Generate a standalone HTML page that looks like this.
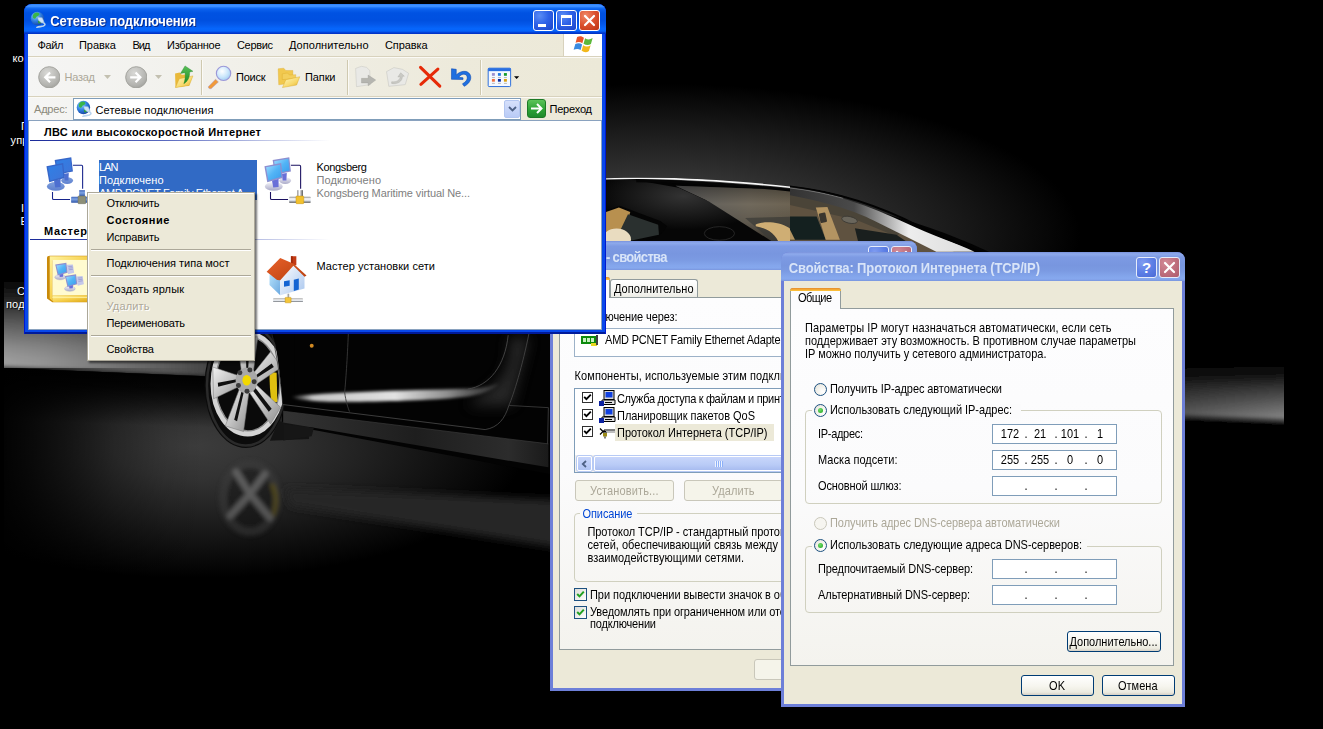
<!DOCTYPE html>
<html lang="ru">
<head>
<meta charset="utf-8">
<title>Сетевые подключения</title>
<style>
*{box-sizing:border-box;margin:0;padding:0}
html,body{width:1323px;height:729px;background:#000;overflow:hidden}
body{position:relative;font-family:"Liberation Sans",sans-serif;font-size:11px;color:#000;-webkit-font-smoothing:antialiased}
.abs{position:absolute}
#wall{position:absolute;left:0;top:0;width:1323px;height:729px}
.dl{position:absolute;color:#fff;font-size:11px;white-space:nowrap;line-height:13px;text-shadow:1px 1px 1px #000}
/* ---------- generic window ---------- */
.win{position:absolute;background:#ece9d8}
.tb{position:absolute;left:0;top:0;right:0;height:30px;border-radius:8px 8px 0 0}
.tbtxt{position:absolute;white-space:nowrap;font-weight:bold;font-size:13px;line-height:16px}
.cbtn{position:absolute;width:21px;height:21px;border:1px solid #fff;border-radius:3px}
.t{position:absolute;white-space:nowrap;line-height:13px;display:block}
</style>
</head>
<body>
<svg width="0" height="0" style="position:absolute"><defs>
<linearGradient id="scrSel" x1="0" y1="0" x2="1" y2="1"><stop offset="0" stop-color="#2f80e6"/><stop offset="1" stop-color="#3f74d8"/></linearGradient>
<linearGradient id="scr" x1="0" y1="0" x2="1" y2="1"><stop offset="0" stop-color="#9fdcff"/><stop offset=".5" stop-color="#52b4f6"/><stop offset="1" stop-color="#3a9cec"/></linearGradient>
<linearGradient id="baseSel" x1="0" y1="0" x2="0" y2="1"><stop offset="0" stop-color="#7f9fdc"/><stop offset="1" stop-color="#5d80cf"/></linearGradient>
<linearGradient id="base" x1="0" y1="0" x2="0" y2="1"><stop offset="0" stop-color="#f4f4f8"/><stop offset="1" stop-color="#a9a9c8"/></linearGradient>
<linearGradient id="pipe" x1="0" y1="0" x2="0" y2="1"><stop offset="0" stop-color="#8a8a8a"/><stop offset=".35" stop-color="#fdfdfd"/><stop offset=".7" stop-color="#cfd6e0"/><stop offset="1" stop-color="#4a4a4a"/></linearGradient>
<linearGradient id="pipeSel" x1="0" y1="0" x2="0" y2="1"><stop offset="0" stop-color="#3d63b8"/><stop offset=".4" stop-color="#7ea4e4"/><stop offset="1" stop-color="#2f55a8"/></linearGradient>
<linearGradient id="pipeV" x1="0" y1="0" x2="1" y2="0"><stop offset="0" stop-color="#8a8a8a"/><stop offset=".4" stop-color="#fdfdfd"/><stop offset="1" stop-color="#555"/></linearGradient>
<linearGradient id="gold" x1="0" y1="0" x2="1" y2="1"><stop offset="0" stop-color="#fff3a0"/><stop offset=".5" stop-color="#f6cf4a"/><stop offset="1" stop-color="#d9a010"/></linearGradient>
<linearGradient id="roof" x1="0" y1="0" x2="1" y2="1"><stop offset="0" stop-color="#e8612a"/><stop offset="1" stop-color="#b8400f"/></linearGradient>
<linearGradient id="hwall" x1="0" y1="0" x2="1" y2="1"><stop offset="0" stop-color="#ffffff"/><stop offset="1" stop-color="#a9c6ee"/></linearGradient>
<linearGradient id="hside" x1="0" y1="0" x2="1" y2="1"><stop offset="0" stop-color="#b4e0fa"/><stop offset="1" stop-color="#6aa8e0"/></linearGradient>
<linearGradient id="fold" x1="0" y1="0" x2="1" y2="1"><stop offset="0" stop-color="#fff7c0"/><stop offset=".6" stop-color="#f7d86a"/><stop offset="1" stop-color="#e2ae25"/></linearGradient>
<radialGradient id="navg" cx=".4" cy=".3" r=".8"><stop offset="0" stop-color="#d9d9d6"/><stop offset=".7" stop-color="#b4b4b0"/><stop offset="1" stop-color="#9c9c98"/></radialGradient>
<radialGradient id="lens" cx=".4" cy=".35" r=".7"><stop offset="0" stop-color="#ffffff"/><stop offset=".6" stop-color="#c9e6fb"/><stop offset="1" stop-color="#9fc9f0"/></radialGradient>
<linearGradient id="grn" x1="0" y1="0" x2="0" y2="1"><stop offset="0" stop-color="#58c058"/><stop offset="1" stop-color="#1c8a22"/></linearGradient>
<linearGradient id="gbtn" x1="0" y1="0" x2="0" y2="1"><stop offset="0" stop-color="#5cc35a"/><stop offset=".5" stop-color="#2da336"/><stop offset="1" stop-color="#1f8a2c"/></linearGradient>
<radialGradient id="globe" cx=".35" cy=".3" r=".8"><stop offset="0" stop-color="#8fd0ff"/><stop offset=".5" stop-color="#2f7fe0"/><stop offset="1" stop-color="#123a9a"/></radialGradient>
</defs></svg><svg id="wall" width="1323" height="729" viewBox="0 0 1323 729">
<defs>
<clipPath id="wc"><rect x="4" y="0" width="1280" height="729"/></clipPath>
<radialGradient id="gBack" cx="660" cy="235" r="420" gradientUnits="userSpaceOnUse" gradientTransform="translate(660 235) scale(1 .36) translate(-660 -235)">
<stop offset="0" stop-color="#454545"/><stop offset=".35" stop-color="#363636"/><stop offset=".7" stop-color="#1a1a1a"/><stop offset="1" stop-color="#000"/></radialGradient>
<linearGradient id="gHorL" x1="0" y1="0" x2="1" y2="0"><stop offset="0" stop-color="#a0a0a0"/><stop offset=".2" stop-color="#929292"/><stop offset=".42" stop-color="#787878"/><stop offset=".62" stop-color="#5e5e5e"/><stop offset=".82" stop-color="#3e3e3e"/><stop offset="1" stop-color="#1a1a1a"/></linearGradient>
<linearGradient id="gFadeUp" x1="0" y1="0" x2="0" y2="1"><stop offset="0" stop-color="#000" stop-opacity="1"/><stop offset=".2" stop-color="#000" stop-opacity=".78"/><stop offset=".45" stop-color="#000" stop-opacity=".4"/><stop offset=".68" stop-color="#000" stop-opacity=".1"/><stop offset=".8" stop-color="#000" stop-opacity="0"/><stop offset="1" stop-color="#000" stop-opacity="0"/></linearGradient>
<linearGradient id="gFadeUpR" x1="0" y1="0" x2="0" y2="1"><stop offset="0" stop-color="#000" stop-opacity="1"/><stop offset=".12" stop-color="#000" stop-opacity="1"/><stop offset=".3" stop-color="#000" stop-opacity=".86"/><stop offset=".5" stop-color="#000" stop-opacity=".55"/><stop offset=".75" stop-color="#000" stop-opacity=".2"/><stop offset=".9" stop-color="#000" stop-opacity="0"/><stop offset="1" stop-color="#000" stop-opacity="0"/></linearGradient>
<linearGradient id="gHorDark" gradientUnits="userSpaceOnUse" x1="0" y1="366" x2="-2" y2="420"><stop offset="0" stop-color="#000" stop-opacity="1"/><stop offset=".3" stop-color="#000" stop-opacity=".85"/><stop offset="1" stop-color="#000" stop-opacity="0"/></linearGradient>
<linearGradient id="gLeftDark" x1="0" y1="0" x2="1" y2="0"><stop offset="0" stop-color="#000" stop-opacity=".9"/><stop offset=".25" stop-color="#000" stop-opacity=".6"/><stop offset=".55" stop-color="#000" stop-opacity=".25"/><stop offset=".8" stop-color="#000" stop-opacity=".07"/><stop offset="1" stop-color="#000" stop-opacity="0"/></linearGradient>
<linearGradient id="gHorR" x1="1" y1="0" x2="0" y2="0"><stop offset="0" stop-color="#858585"/><stop offset=".6" stop-color="#5a5a5a"/><stop offset="1" stop-color="#333"/></linearGradient>
<radialGradient id="gFloor" cx="195" cy="446" r="330" gradientUnits="userSpaceOnUse" gradientTransform="translate(195 446) scale(1 .4) translate(-195 -446)">
<stop offset="0" stop-color="#3c3c3c"/><stop offset=".25" stop-color="#323232"/><stop offset=".5" stop-color="#222"/><stop offset=".75" stop-color="#111"/><stop offset="1" stop-color="#000"/></radialGradient>
<linearGradient id="gDoor" x1="0" y1="0" x2="1" y2="0"><stop offset="0" stop-color="#aaa" stop-opacity=".2"/><stop offset=".1" stop-color="#d0d0d0" stop-opacity=".95"/><stop offset=".5" stop-color="#e2e2e2" stop-opacity="1"/><stop offset=".75" stop-color="#a0a0a0" stop-opacity=".9"/><stop offset="1" stop-color="#666" stop-opacity=".4"/></linearGradient>
<linearGradient id="gSill" x1="0" y1="0" x2="1" y2="0"><stop offset="0" stop-color="#333"/><stop offset=".5" stop-color="#1e1e1e"/><stop offset=".85" stop-color="#2c2c2c"/><stop offset="1" stop-color="#1a1a1a"/></linearGradient>
<linearGradient id="gGlass" x1="0" y1="0" x2="1" y2="0"><stop offset="0" stop-color="#5c5c5c"/><stop offset=".3" stop-color="#70695c"/><stop offset=".6" stop-color="#6a5f4c"/><stop offset="1" stop-color="#5a4e3c"/></linearGradient>
<linearGradient id="gGlassV" x1="0" y1="0" x2="0" y2="1"><stop offset="0" stop-color="#000" stop-opacity=".35"/><stop offset=".3" stop-color="#000" stop-opacity="0"/><stop offset=".6" stop-color="#000" stop-opacity=".15"/><stop offset="1" stop-color="#000" stop-opacity=".6"/></linearGradient>
<linearGradient id="gPillar" gradientUnits="userSpaceOnUse" x1="0" y1="0" x2="1100" y2="0"><stop offset="0" stop-color="#333"/><stop offset=".35" stop-color="#4a4a4a"/><stop offset=".5" stop-color="#9a9a9a"/><stop offset=".65" stop-color="#ededed"/><stop offset="1" stop-color="#dcdcdc"/></linearGradient>
<radialGradient id="gSheen" cx=".45" cy=".25" r=".5"><stop offset="0" stop-color="#333"/><stop offset="1" stop-color="#060606"/></radialGradient>
<linearGradient id="gSpoke" x1="0" y1="0" x2="1" y2="1"><stop offset="0" stop-color="#f2f2f2"/><stop offset=".5" stop-color="#c4c4c4"/><stop offset="1" stop-color="#8c8c8c"/></linearGradient>
<clipPath id="roofL"><path d="M600,179 L606,178.2 C680,176.5 750,180.5 790,185.5 L790,262 L600,262 Z"/></clipPath>
<clipPath id="roofR"><path d="M790,185.5 C830,190.5 860,198.5 883,206.5 C920,220.5 950,237.5 982,252 L1000,262 L790,262 Z"/></clipPath>
<filter id="b10" x="-20%" y="-100%" width="140%" height="300%"><feGaussianBlur stdDeviation="8"/></filter><filter id="b30" x="-50%" y="-50%" width="200%" height="200%"><feGaussianBlur stdDeviation="30"/></filter><filter id="b2"><feGaussianBlur stdDeviation="2"/></filter>
<filter id="b3"><feGaussianBlur stdDeviation="3"/></filter>
<filter id="b4"><feGaussianBlur stdDeviation="4"/></filter>
<filter id="b7"><feGaussianBlur stdDeviation="7"/></filter>
<filter id="b1"><feGaussianBlur stdDeviation="1"/></filter>
<filter id="b12"><feGaussianBlur stdDeviation="12"/></filter>
</defs>
<g clip-path="url(#wc)">
<!-- backdrop glow -->
<rect x="4" y="0" width="1280" height="440" fill="url(#gBack)"/>
<!-- left horizon glow -->
<g filter="url(#b2)"><polygon points="-10,280 270,280 270,379 -10,367" fill="url(#gHorL)"/>
<polygon points="-12,278 272,278 272,381 -12,369" fill="url(#gFadeUp)"/><polygon points="-12,369 272,381 272,400 -12,390" fill="#000"/></g>
<!-- right horizon glow -->
<g filter="url(#b2)"><polygon points="1100,356 1300,356 1300,421 1100,413" fill="url(#gHorR)"/>
<polygon points="1100,354 1300,354 1300,423 1100,415" fill="url(#gFadeUpR)"/><polygon points="1100,415 1300,423 1300,440 1100,432" fill="#000"/></g>
<!-- floor -->
<polygon points="4,368 300,380 700,396 700,729 4,729" fill="#000"/>
<polygon points="4,368 400,384 700,396 700,729 4,729" fill="url(#gFloor)"/>
<polygon points="4,368 400,384 700,396 700,470 4,445" fill="url(#gHorDark)"/>
<rect x="4" y="368" width="200" height="361" fill="url(#gLeftDark)"/>
<!-- floor streaks -->
<g filter="url(#b4)">
<polygon points="285,488 560,500 560,548 290,506" fill="#262626"/>
</g>
<!-- CAR BODY silhouette -->
<path d="M205,333 L205,290 C260,225 420,184 606,178 C760,180 900,205 1010,262 L1150,316 L1150,517 L560,476 L282,424 L282,333 Z" fill="#030303"/>
<!-- ROOF / CABIN (coords of crop 600,150 scale 6.615) -->
<g clip-path="url(#roofL)"><g transform="translate(600 150) scale(.15117)">
<path d="M500,236 L1400,270 L2100,420 L2100,640 L1130,640 L700,330 Z" fill="url(#gGlass)"/>
<path d="M500,236 L1400,270 L2100,420 L2100,640 L1130,640 L700,330 Z" fill="url(#gGlassV)"/>
<path d="M1323,440 L2000,470 L2000,640 L1323,640 Z" fill="#14201f" opacity=".8"/>
<path d="M960,450 L1323,440 L1323,640 L1180,640 Z" fill="#3a3a36" opacity=".7"/>
<!-- rear deck / pillar -->
<path d="M40,192 L240,200 L520,250 L720,340 L1130,600 L1180,640 L40,640 Z" fill="url(#gSheen)"/>
<!-- side window -->
<path d="M40,400 L130,368 L400,470 L445,505 L385,575 L200,640 L40,640 Z" fill="#050505"/>
<path d="M40,410 L125,380 L200,410 L150,600 L40,600 Z" fill="#b8904f"/>
<path d="M185,425 L385,495 L390,560 L200,600 L120,560 Z" fill="#2a302f"/>
<ellipse cx="110" cy="590" rx="95" ry="70" fill="#e9dcc0"/>
<!-- head rest -->
<path d="M1030,492 C1080,470 1180,470 1250,515 C1290,545 1300,590 1300,640 L1190,640 C1180,580 1130,520 1030,505 Z" fill="#cfae74"/>
<ellipse cx="790" cy="552" rx="100" ry="45" fill="none" stroke="#2e2e2e" stroke-width="5"/>
<!-- roof highlight -->
<path d="M40,190 C400,176 900,205 1400,262" fill="none" stroke="#f6f6f6" stroke-width="11"/>
<path d="M240,204 C500,206 900,224 1400,282" fill="none" stroke="#050505" stroke-width="18"/>
</g></g>
<!-- front part (coords of crop 790,170 scale 6.014) -->
<g clip-path="url(#roofR)"><g transform="translate(790 170) scale(.16628)">
<path d="M0,150 L300,200 L700,330 L1000,500 L0,500 Z" fill="#5f5240"/>
<path d="M0,130 C150,150 350,190 520,260 L700,340 L640,400 L400,300 L0,210 Z" fill="#4a4438"/>
<path d="M0,280 L160,280 L215,420 L0,420 Z" fill="#14201f"/>
<path d="M390,350 L640,390 L760,470 L420,470 Z" fill="#1a1f1e"/>
<path d="M155,225 L225,222 L300,420 L215,420 Z" fill="#b39462"/>
<rect x="178" y="258" width="40" height="58" rx="6" fill="#3a362e" transform="rotate(-12 198 287)"/>
<ellipse cx="358" cy="300" rx="48" ry="20" fill="#6a665c" stroke="#3c3a34" stroke-width="5" transform="rotate(12 358 300)"/>
<path d="M0,420 L30,420 L0,360 Z" fill="#b39462"/>
<!-- A pillar silver -->
<path d="M0,100 C250,135 480,215 700,320 C850,390 1000,440 1110,492 L880,492 L700,402 L500,302 C400,252 250,200 0,152 Z" fill="url(#gPillar)"/>
<path d="M0,108 C120,122 220,142 320,170" fill="none" stroke="#8a8a8a" stroke-width="7" opacity=".7"/>
<path d="M0,96 C300,135 560,225 780,340 C920,410 1040,450 1150,492" fill="none" stroke="#020202" stroke-width="12"/>
</g></g>
<!-- WHEEL (coords of crop 195,325 scale 5.61) -->
<g transform="translate(195 325) scale(.17825)">
<ellipse cx="285" cy="335" rx="232" ry="355" fill="#0c0c0c"/>
<ellipse cx="285" cy="338" rx="218" ry="338" fill="none" stroke="#2a2a2a" stroke-width="14"/>
<path d="M470,540 L640,560 L640,640 L420,650 Z" fill="#141414"/>
<ellipse cx="296" cy="330" rx="194" ry="280" fill="#0a0a0a" stroke="#d4d4d4" stroke-width="30"/>
<ellipse cx="296" cy="330" rx="180" ry="264" fill="none" stroke="#8a8a8a" stroke-width="8"/>
<path d="M418,262 L458,268 L462,430 L430,440 C420,380 418,320 418,262 Z" fill="#e0c010"/>
<g fill="url(#gSpoke)" stroke="#7a7a7a" stroke-width="3">
<path d="M262,272 L236,72 L352,66 L326,274 Z"/>
<path d="M316,286 L424,150 L486,236 L338,336 Z"/>
<path d="M334,326 L480,462 L424,556 L296,364 Z"/>
<path d="M306,352 L272,598 L170,566 L258,336 Z"/>
<path d="M262,338 L104,414 L100,236 L262,290 Z"/>
</g>
<g fill="#101010"><path d="M288,250 L284,112 L306,110 L298,250 Z"/><path d="M342,282 L430,216 L442,236 L347,296 Z"/><path d="M338,352 L430,470 L414,486 L322,364 Z"/><path d="M276,366 L236,540 L220,532 L264,360 Z"/><path d="M250,316 L130,346 L128,324 L250,302 Z"/></g>
<ellipse cx="290" cy="312" rx="62" ry="72" fill="#a8a8a8"/>
<g fill="#3a3a3a"><circle cx="252" cy="268" r="14"/><circle cx="308" cy="252" r="14"/><circle cx="332" cy="318" r="14"/><circle cx="292" cy="372" r="14"/><circle cx="244" cy="340" r="14"/></g>
<ellipse cx="290" cy="310" rx="24" ry="30" fill="#f2d800"/>
<path d="M430,45 C455,150 480,300 492,440" fill="none" stroke="#2a2a2a" stroke-width="4"/>
<path d="M440,40 L560,40 L560,447 L492,445 C482,300 460,150 440,40 Z" fill="#030303"/>
</g>
<!-- DOOR / SILL (coords of crop 270,333 scale 4.555) -->
<g transform="translate(270 333) scale(.21954)">
<g filter="url(#b10)">
<path d="M100,290 C250,270 600,262 900,254 C960,252 1010,244 1040,230 C1020,258 960,284 880,292 C700,312 350,316 250,312 C170,308 120,302 100,290 Z" fill="url(#gDoor)"/>
</g>
<g filter="url(#b30)" opacity=".55"><path d="M1030,230 C1080,180 1100,100 1090,20 L1180,20 L1100,330 L900,330 Z" fill="#444"/></g>
<path d="M900,256 C1000,240 1070,150 1085,10" fill="none" stroke="#4a4a4a" stroke-width="4"/>
<path d="M357,0 C352,120 345,220 340,270 C345,310 355,340 362,358" fill="none" stroke="#3a3a3a" stroke-width="4"/>
<path d="M1180,0 C1150,150 1110,280 1088,330 C1070,390 1040,430 980,440 L60,326" fill="none" stroke="#454545" stroke-width="4"/>
<path d="M1088,330 L1268,340 L1262,610" fill="none" stroke="#3c3c3c" stroke-width="4"/>
<path d="M60,356 L1268,505 L1268,612 L60,408 Z" fill="url(#gSill)"/>
<path d="M60,356 L1268,505" stroke="#3d3d3d" stroke-width="3"/>
<circle cx="190" cy="58" r="9" fill="#d28a22"/>
<path d="M60,415 L200,432 L190,470 L60,490 Z" fill="#161616"/>
</g>
<!-- wheel reflection -->
<g transform="translate(250 498)" filter="url(#b2)" opacity=".5">
<ellipse cx="0" cy="0" rx="31" ry="38" fill="#3c3c3c"/>
<ellipse cx="0" cy="0" rx="23" ry="30" fill="#141414"/>
<g stroke="#909090" stroke-width="6" stroke-linecap="round">
<path d="M0,-4 L-14,-26"/><path d="M0,-4 L15,-24"/><path d="M0,-4 L-20,18"/><path d="M0,-4 L20,20"/>
</g>
<path d="M22,-14 C27,-4 27,8 23,18" stroke="#7a6a10" stroke-width="4" fill="none"/>
</g>
</g>
</svg>

<span class="t" style="left:12.5px;top:52px;color:#fff;text-shadow:1px 1px 1px #000;letter-spacing:.15px;">компьютер</span>
<span class="t" style="left:21px;top:120px;color:#fff;text-shadow:1px 1px 1px #000;letter-spacing:.15px;">Панель</span>
<span class="t" style="left:10.5px;top:134px;color:#fff;text-shadow:1px 1px 1px #000;letter-spacing:.15px;">управления</span>
<span class="t" style="left:21px;top:202px;color:#fff;text-shadow:1px 1px 1px #000;letter-spacing:.15px;">Internet</span>
<span class="t" style="left:20.5px;top:215px;color:#fff;text-shadow:1px 1px 1px #000;letter-spacing:.15px;">Explorer</span>
<span class="t" style="left:17px;top:285px;color:#fff;text-shadow:1px 1px 1px #000;letter-spacing:.15px;">Сетевые</span>
<span class="t" style="left:6px;top:298px;color:#fff;text-shadow:1px 1px 1px #000;letter-spacing:.15px;">подключения</span>
<div class="abs " style="left:550px;top:241px;width:367px;height:450px;background:#6d7fd8;border-radius:8px 8px 0 0;"></div>
<div class="abs " style="left:550px;top:241px;width:367px;height:29px;border-radius:8px 8px 0 0;background:linear-gradient(to bottom,#7a92dc 0%,#8eaaec 7%,#7d9ae3 18%,#7896df 45%,#7b9ae2 65%,#84a6ec 85%,#86a8ee 93%,#7a96de 100%);"></div>
<div class="abs " style="left:553px;top:270px;width:361px;height:418px;background:#ece9d8;"></div>
<span class="t" style="left:606px;top:250px;font-size:13px;line-height:16px;font-weight:bold;color:#d8e4f8;letter-spacing:-0.675px;transform:scaleY(1.08);transform-origin:0 12.5px;">- свойства</span>
<div class="abs " style="left:868px;top:246px;width:21px;height:21px;border:1px solid #e6ecfa;border-radius:3px;background:radial-gradient(circle at 30% 25%,#7f9cf0 0%,#5d7fe6 50%,#4a6ad6 100%);"><span class="t" style="left:0;top:0;width:19px;text-align:center;font-weight:bold;font-size:15px;line-height:19px;color:#fff">?</span></div>
<div class="abs " style="left:891px;top:246px;width:21px;height:21px;border:1px solid #e6ecfa;border-radius:3px;background:radial-gradient(circle at 30% 25%,#d28a96 0%,#c0707f 50%,#ad5b6c 100%);"><svg class="abs" style="left:0;top:0" width="19" height="19" viewBox="0 0 19 19"><path d="M5,5 L14,14 M14,5 L5,14" stroke="#fff" stroke-width="2.2" stroke-linecap="round"/></svg></div>
<div class="abs " style="left:559px;top:297px;width:350px;height:353px;background:linear-gradient(to bottom,#fdfdfe 0%,#fbfbfc 50%,#f4f3ee 100%);border:1px solid #919b9c;"></div>
<div class="abs " style="left:559px;top:277px;width:51px;height:21px;background:#fcfcfe;border:1px solid #919b9c;border-bottom:none;border-radius:3px 3px 0 0;"></div>
<div class="abs " style="left:559px;top:277px;width:51px;height:3px;background:linear-gradient(to bottom,#e68b2c,#ffc73c);border-radius:3px 3px 0 0;"></div>
<span class="t" style="left:567px;top:281px;letter-spacing:-0.543px;transform:scaleY(1.12);transform-origin:0 10.3px;">Общие</span>
<div class="abs " style="left:610px;top:279px;width:88px;height:18px;background:linear-gradient(to bottom,#ffffff,#f3f3ee 80%,#ecebe4);border:1px solid #919b9c;border-bottom:none;border-radius:3px 3px 0 0;"></div>
<span class="t" style="left:614px;top:283px;letter-spacing:0.027px;transform:scaleY(1.12);transform-origin:0 10.3px;">Дополнительно</span>
<span class="t" style="left:574.5px;top:311px;letter-spacing:-0.103px;transform:scaleY(1.12);transform-origin:0 10.3px;">Подключение через:</span>
<div class="abs " style="left:574px;top:328px;width:327px;height:29px;background:#fff;border:1px solid #9db2c8;"></div>
<svg class="abs" style="left:581px;top:335px" width="17" height="12" viewBox="0 0 17 12"><rect x="0" y="1" width="15" height="8" fill="#0c8a0c"/><path d="M2,3 h3 v4 h-3 z M6,3 h3 v4 h-3 z M10,3 h3 v4 h-3 z" fill="#c8f0c0"/><rect x="10" y="8" width="6" height="3" fill="#e8d820"/><rect x="15" y="0" width="2" height="10" fill="#404040"/></svg>
<span class="t" style="left:605px;top:334px;letter-spacing:-0.209px;transform:scaleY(1.12);transform-origin:0 10.3px;">AMD PCNET Family Ethernet Adapter</span>
<span class="t" style="left:574.6px;top:370px;letter-spacing:0.072px;transform:scaleY(1.12);transform-origin:0 10.3px;">Компоненты, используемые этим подключением:</span>
<div class="abs " style="left:574px;top:388px;width:327px;height:85px;background:#fff;border:1px solid #7f9db9;"></div>
<div class="abs " style="left:615px;top:424px;width:159px;height:17px;background:#ece9d8;"></div>
<div class="abs " style="left:582px;top:392px;width:11px;height:11px;background:#fff;border:1px solid #303030;"><svg class="abs" style="left:0px;top:0px" width="9" height="9" viewBox="0 0 9 9"><path d="M1.2,3.8 L3.4,6.2 L7.8,1.6" stroke="#000" stroke-width="1.8" fill="none"/></svg></div>
<svg class="abs" style="left:599px;top:390px" width="17" height="17" viewBox="0 0 17 17"><rect x="5" y="0.5" width="10" height="9" fill="#d8d8d8" stroke="#000" stroke-width="1"/><rect x="6.5" y="2" width="7" height="5.5" fill="#1040e0"/><path d="M3,10 L16,10 L16,14.5 L3,14.5 Z" fill="#e0e0e0" stroke="#000" stroke-width="1"/><rect x="0" y="11" width="5" height="5" fill="#0a20a0"/><path d="M6,12.5 L13,12.5" stroke="#000" stroke-width="1"/></svg>
<span class="t" style="left:617px;top:393px;letter-spacing:-0.323px;transform:scaleY(1.12);transform-origin:0 10.3px;">Служба доступа к файлам и принтерам сетей Micro...</span>
<div class="abs " style="left:582px;top:409px;width:11px;height:11px;background:#fff;border:1px solid #303030;"><svg class="abs" style="left:0px;top:0px" width="9" height="9" viewBox="0 0 9 9"><path d="M1.2,3.8 L3.4,6.2 L7.8,1.6" stroke="#000" stroke-width="1.8" fill="none"/></svg></div>
<svg class="abs" style="left:599px;top:407px" width="17" height="17" viewBox="0 0 17 17"><rect x="5" y="0.5" width="10" height="9" fill="#d8d8d8" stroke="#000" stroke-width="1"/><rect x="6.5" y="2" width="7" height="5.5" fill="#1040e0"/><path d="M3,10 L16,10 L16,14.5 L3,14.5 Z" fill="#e0e0e0" stroke="#000" stroke-width="1"/><rect x="0" y="11" width="5" height="5" fill="#0a20a0"/><path d="M6,12.5 L13,12.5" stroke="#000" stroke-width="1"/></svg>
<span class="t" style="left:617px;top:410px;letter-spacing:-0.023px;transform:scaleY(1.12);transform-origin:0 10.3px;">Планировщик пакетов QoS</span>
<div class="abs " style="left:582px;top:426px;width:11px;height:11px;background:#fff;border:1px solid #303030;"><svg class="abs" style="left:0px;top:0px" width="9" height="9" viewBox="0 0 9 9"><path d="M1.2,3.8 L3.4,6.2 L7.8,1.6" stroke="#000" stroke-width="1.8" fill="none"/></svg></div>
<svg class="abs" style="left:599px;top:426px" width="17" height="17" viewBox="0 0 17 17"><path d="M1,2.5 L4,5.5 M1,8.5 L4,5.5 M4,5.5 L7,5.5 M5,4 L16,4 M5,4 L5,7 M7,5.5 L7,9" stroke="#000" stroke-width="1.2" fill="none"/><rect x="4" y="7" width="4" height="3.5" fill="#9a8a18"/><path d="M6,10.5 L6,12.5" stroke="#000" stroke-width="1"/><path d="M8,6 L16,6" stroke="#808080" stroke-width="1"/></svg>
<span class="t" style="left:617px;top:427px;letter-spacing:-0.021px;transform:scaleY(1.12);transform-origin:0 10.3px;">Протокол Интернета (TCP/IP)</span>
<div class="abs " style="left:575px;top:455px;width:325px;height:17px;background:#f3f1ec;"></div>
<div class="abs " style="left:577px;top:456px;width:15px;height:15px;border-radius:2px;border:1px solid #fff;background:linear-gradient(to bottom,#c8d6fb,#b0c4f4);box-shadow:0 0 0 1px #b7caf5;"><svg class="abs" style="left:3px;top:3px" width="7" height="8" viewBox="0 0 7 8"><path d="M5,1 L1.8,4 L5,7" stroke="#4d6185" stroke-width="1.8" fill="none"/></svg></div>
<div class="abs " style="left:594px;top:456px;width:280px;height:15px;border-radius:2px;border:1px solid #fff;background:linear-gradient(to bottom,#c8d6fb,#b9cbf6 60%,#a8bcf0);box-shadow:0 0 0 1px #b7caf5;"><div class="abs" style="left:120px;top:4px;width:8px;height:6px;background:repeating-linear-gradient(to right,#eef3fe 0,#eef3fe 1px,#8cb0f8 1px,#8cb0f8 2px)"></div></div>
<div class="abs " style="left:575px;top:480px;width:99px;height:21px;border:1px solid #c9c7ba;border-radius:3px;background:#f5f4ea;"></div><span class="t" style="left:590px;top:485px;color:#aca899;letter-spacing:0.133px;transform:scaleY(1.12);transform-origin:0 10.3px;">Установить...</span>
<div class="abs " style="left:684px;top:480px;width:99px;height:21px;border:1px solid #c9c7ba;border-radius:3px;background:#f5f4ea;"></div><span class="t" style="left:712px;top:485px;color:#aca899;letter-spacing:0.083px;transform:scaleY(1.12);transform-origin:0 10.3px;">Удалить</span>
<div class="abs " style="left:793px;top:480px;width:99px;height:21px;border:1px solid #003c74;border-radius:3px;background:linear-gradient(to bottom,#ffffff 0%,#f6f5ee 55%,#ecebe0 85%,#d6d0c5 100%);"></div><span class="t" style="left:815px;top:485px;letter-spacing:0.241px;transform:scaleY(1.12);transform-origin:0 10.3px;">Свойства</span>
<div class="abs " style="left:574px;top:513px;width:327px;height:69px;border:1px solid #d0d0bf;border-radius:4px;"></div>
<div class="abs " style="left:580px;top:507px;width:57px;height:13px;background:#f9f9f9;"></div>
<span class="t" style="left:582.5px;top:508px;color:#0046d5;letter-spacing:-0.089px;transform:scaleY(1.12);transform-origin:0 10.3px;">Описание</span>
<span class="t" style="left:587.4px;top:526px;letter-spacing:-0.055px;transform:scaleY(1.12);transform-origin:0 10.3px;">Протокол TCP/IP - стандартный протокол глобальных</span>
<span class="t" style="left:587.4px;top:539px;letter-spacing:0.007px;transform:scaleY(1.12);transform-origin:0 10.3px;">сетей, обеспечивающий связь между различными</span>
<span class="t" style="left:587.4px;top:552px;letter-spacing:0.023px;transform:scaleY(1.12);transform-origin:0 10.3px;">взаимодействующими сетями.</span>
<div class="abs " style="left:574px;top:588px;width:13px;height:13px;background:linear-gradient(135deg,#dcdcd7,#fff);border:1px solid #1c5180;"><svg class="abs" style="left:1px;top:1px" width="9" height="9" viewBox="0 0 9 9"><path d="M1.2,4 L3.5,6.4 L7.8,1.6" stroke="#21a121" stroke-width="2" fill="none"/></svg></div>
<div class="abs " style="left:574px;top:606px;width:13px;height:13px;background:linear-gradient(135deg,#dcdcd7,#fff);border:1px solid #1c5180;"><svg class="abs" style="left:1px;top:1px" width="9" height="9" viewBox="0 0 9 9"><path d="M1.2,4 L3.5,6.4 L7.8,1.6" stroke="#21a121" stroke-width="2" fill="none"/></svg></div>
<span class="t" style="left:590px;top:589px;letter-spacing:-0.036px;transform:scaleY(1.12);transform-origin:0 10.3px;">При подключении вывести значок в области уведомлений</span>
<span class="t" style="left:590px;top:606px;letter-spacing:-0.107px;transform:scaleY(1.12);transform-origin:0 10.3px;">Уведомлять при ограниченном или отсутствующем</span>
<span class="t" style="left:590px;top:618px;letter-spacing:-0.183px;transform:scaleY(1.12);transform-origin:0 10.3px;">подключении</span>
<div class="abs " style="left:754px;top:659px;width:73px;height:21px;border:1px solid #c9c7ba;border-radius:3px;background:#f5f4ea;"></div><span class="t" style="left:783px;top:663px;color:#aca899;letter-spacing:0.094px;transform:scaleY(1.12);transform-origin:0 10.3px;">OK</span>
<div class="abs " style="left:833px;top:659px;width:73px;height:21px;border:1px solid #003c74;border-radius:3px;background:linear-gradient(to bottom,#ffffff 0%,#f6f5ee 55%,#ecebe0 85%,#d6d0c5 100%);"></div><span class="t" style="left:849px;top:663px;letter-spacing:-0.094px;transform:scaleY(1.12);transform-origin:0 10.3px;">Отмена</span>
<div class="abs " style="left:781px;top:252px;width:404px;height:455px;background:#6d7fd8;border-radius:8px 8px 0 0;"></div>
<div class="abs " style="left:781px;top:252px;width:404px;height:29px;border-radius:8px 8px 0 0;background:linear-gradient(to bottom,#7a92dc 0%,#8eaaec 7%,#7d9ae3 18%,#7896df 45%,#7b9ae2 65%,#84a6ec 85%,#86a8ee 93%,#7a96de 100%);"></div>
<div class="abs " style="left:784px;top:281px;width:398px;height:423px;background:#ece9d8;"></div>
<span class="t" style="left:788.7px;top:261px;font-size:13px;line-height:16px;font-weight:bold;color:#d8e4f8;letter-spacing:-0.131px;transform:scaleY(1.08);transform-origin:0 12.5px;">Свойства: Протокол Интернета (TCP/IP)</span>
<div class="abs " style="left:1136px;top:257px;width:21px;height:21px;border:1px solid #e6ecfa;border-radius:3px;background:radial-gradient(circle at 30% 25%,#7f9cf0 0%,#5d7fe6 50%,#4a6ad6 100%);"><span class="t" style="left:0;top:0;width:19px;text-align:center;font-weight:bold;font-size:15px;line-height:19px;color:#fff">?</span></div>
<div class="abs " style="left:1159px;top:257px;width:21px;height:21px;border:1px solid #e6ecfa;border-radius:3px;background:radial-gradient(circle at 30% 25%,#d28a96 0%,#c0707f 50%,#ad5b6c 100%);"><svg class="abs" style="left:0;top:0" width="19" height="19" viewBox="0 0 19 19"><path d="M5,5 L14,14 M14,5 L5,14" stroke="#fff" stroke-width="2.2" stroke-linecap="round"/></svg></div>
<div class="abs " style="left:790px;top:308px;width:384px;height:358px;background:linear-gradient(to bottom,#fdfdfe 0%,#fbfbfc 50%,#f4f3ee 100%);border:1px solid #919b9c;"></div>
<div class="abs " style="left:790px;top:288px;width:51px;height:21px;background:#fcfcfe;border:1px solid #919b9c;border-bottom:none;border-radius:3px 3px 0 0;"></div>
<div class="abs " style="left:790px;top:288px;width:51px;height:3px;background:linear-gradient(to bottom,#e68b2c,#ffc73c);border-radius:3px 3px 0 0;"></div>
<span class="t" style="left:798px;top:292px;letter-spacing:-0.543px;transform:scaleY(1.12);transform-origin:0 10.3px;">Общие</span>
<span class="t" style="left:805px;top:322px;letter-spacing:0.060px;transform:scaleY(1.12);transform-origin:0 10.3px;">Параметры IP могут назначаться автоматически, если сеть</span>
<span class="t" style="left:805px;top:335px;letter-spacing:0.004px;transform:scaleY(1.12);transform-origin:0 10.3px;">поддерживает эту возможность. В противном случае параметры</span>
<span class="t" style="left:805px;top:348px;letter-spacing:-0.007px;transform:scaleY(1.12);transform-origin:0 10.3px;">IP можно получить у сетевого администратора.</span>
<div class="abs " style="left:814px;top:383px;width:13px;height:13px;border-radius:50%;border:1px solid #1c5180;background:radial-gradient(circle at 70% 70%,#fff 0%,#f0efe8 60%,#dcdcd4 100%);"></div>
<span class="t" style="left:830px;top:383px;letter-spacing:-0.082px;transform:scaleY(1.12);transform-origin:0 10.3px;">Получить IP-адрес автоматически</span>
<div class="abs " style="left:805px;top:410px;width:357px;height:94px;border:1px solid #d0d0bf;border-radius:4px;"></div>
<div class="abs " style="left:812px;top:404px;width:209px;height:14px;background:#fbfbfc;"></div>
<div class="abs " style="left:814px;top:404px;width:13px;height:13px;border-radius:50%;border:1px solid #1c5180;background:radial-gradient(circle at 70% 70%,#fff 0%,#f0efe8 60%,#dcdcd4 100%);"><div class="abs" style="left:3px;top:3px;width:5px;height:5px;border-radius:50%;background:radial-gradient(circle at 40% 35%,#6fe06a,#1fa01f)"></div></div>
<span class="t" style="left:830px;top:404px;letter-spacing:-0.051px;transform:scaleY(1.12);transform-origin:0 10.3px;">Использовать следующий IP-адрес:</span>
<span class="t" style="left:818px;top:428px;letter-spacing:-0.299px;transform:scaleY(1.12);transform-origin:0 10.3px;">IP-адрес:</span>
<span class="t" style="left:818px;top:454px;letter-spacing:0.048px;transform:scaleY(1.12);transform-origin:0 10.3px;">Маска подсети:</span>
<span class="t" style="left:818px;top:480px;letter-spacing:-0.121px;transform:scaleY(1.12);transform-origin:0 10.3px;">Основной шлюз:</span>
<div class="abs " style="left:992px;top:424px;width:125px;height:20px;background:#fff;border:1px solid #7f9db9;"></div><span class="t" style="left:1024.5px;top:428px;transform:scaleY(1.12);transform-origin:0 10.3px;">.</span><span class="t" style="left:1054.5px;top:428px;transform:scaleY(1.12);transform-origin:0 10.3px;">.</span><span class="t" style="left:1084.5px;top:428px;transform:scaleY(1.12);transform-origin:0 10.3px;">.</span><span class="t" style="left:1000.82px;top:428px;transform:scaleY(1.12);transform-origin:0 10.3px;">172</span><span class="t" style="left:1033.88px;top:428px;transform:scaleY(1.12);transform-origin:0 10.3px;">21</span><span class="t" style="left:1060.82px;top:428px;transform:scaleY(1.12);transform-origin:0 10.3px;">101</span><span class="t" style="left:1096.94px;top:428px;transform:scaleY(1.12);transform-origin:0 10.3px;">1</span>
<div class="abs " style="left:992px;top:450px;width:125px;height:20px;background:#fff;border:1px solid #7f9db9;"></div><span class="t" style="left:1024.5px;top:454px;transform:scaleY(1.12);transform-origin:0 10.3px;">.</span><span class="t" style="left:1054.5px;top:454px;transform:scaleY(1.12);transform-origin:0 10.3px;">.</span><span class="t" style="left:1084.5px;top:454px;transform:scaleY(1.12);transform-origin:0 10.3px;">.</span><span class="t" style="left:1000.82px;top:454px;transform:scaleY(1.12);transform-origin:0 10.3px;">255</span><span class="t" style="left:1030.82px;top:454px;transform:scaleY(1.12);transform-origin:0 10.3px;">255</span><span class="t" style="left:1066.94px;top:454px;transform:scaleY(1.12);transform-origin:0 10.3px;">0</span><span class="t" style="left:1096.94px;top:454px;transform:scaleY(1.12);transform-origin:0 10.3px;">0</span>
<div class="abs " style="left:992px;top:476px;width:125px;height:20px;background:#fff;border:1px solid #7f9db9;"></div><span class="t" style="left:1024.5px;top:480px;transform:scaleY(1.12);transform-origin:0 10.3px;">.</span><span class="t" style="left:1054.5px;top:480px;transform:scaleY(1.12);transform-origin:0 10.3px;">.</span><span class="t" style="left:1084.5px;top:480px;transform:scaleY(1.12);transform-origin:0 10.3px;">.</span>
<div class="abs " style="left:814px;top:517px;width:13px;height:13px;border-radius:50%;border:1px solid #c9c7ba;background:#f6f5f0;"></div>
<span class="t" style="left:830px;top:517px;color:#aca899;letter-spacing:-0.056px;transform:scaleY(1.12);transform-origin:0 10.3px;">Получить адрес DNS-сервера автоматически</span>
<div class="abs " style="left:805px;top:546px;width:357px;height:67px;border:1px solid #d0d0bf;border-radius:4px;"></div>
<div class="abs " style="left:812px;top:539px;width:275px;height:14px;background:#f8f8f7;"></div>
<div class="abs " style="left:814px;top:539px;width:13px;height:13px;border-radius:50%;border:1px solid #1c5180;background:radial-gradient(circle at 70% 70%,#fff 0%,#f0efe8 60%,#dcdcd4 100%);"><div class="abs" style="left:3px;top:3px;width:5px;height:5px;border-radius:50%;background:radial-gradient(circle at 40% 35%,#6fe06a,#1fa01f)"></div></div>
<span class="t" style="left:830px;top:539px;letter-spacing:-0.029px;transform:scaleY(1.12);transform-origin:0 10.3px;">Использовать следующие адреса DNS-серверов:</span>
<span class="t" style="left:818px;top:563px;letter-spacing:-0.099px;transform:scaleY(1.12);transform-origin:0 10.3px;">Предпочитаемый DNS-сервер:</span>
<span class="t" style="left:818px;top:589px;letter-spacing:-0.063px;transform:scaleY(1.12);transform-origin:0 10.3px;">Альтернативный DNS-сервер:</span>
<div class="abs " style="left:992px;top:559px;width:125px;height:20px;background:#fff;border:1px solid #7f9db9;"></div><span class="t" style="left:1024.5px;top:563px;transform:scaleY(1.12);transform-origin:0 10.3px;">.</span><span class="t" style="left:1054.5px;top:563px;transform:scaleY(1.12);transform-origin:0 10.3px;">.</span><span class="t" style="left:1084.5px;top:563px;transform:scaleY(1.12);transform-origin:0 10.3px;">.</span>
<div class="abs " style="left:992px;top:585px;width:125px;height:20px;background:#fff;border:1px solid #7f9db9;"></div><span class="t" style="left:1024.5px;top:589px;transform:scaleY(1.12);transform-origin:0 10.3px;">.</span><span class="t" style="left:1054.5px;top:589px;transform:scaleY(1.12);transform-origin:0 10.3px;">.</span><span class="t" style="left:1084.5px;top:589px;transform:scaleY(1.12);transform-origin:0 10.3px;">.</span>
<div class="abs " style="left:1067px;top:631px;width:94px;height:21px;border:1px solid #003c74;border-radius:3px;background:linear-gradient(to bottom,#ffffff 0%,#f6f5ee 55%,#ecebe0 85%,#d6d0c5 100%);"></div><span class="t" style="left:1069.5px;top:636px;letter-spacing:-0.023px;transform:scaleY(1.12);transform-origin:0 10.3px;">Дополнительно...</span>
<div class="abs " style="left:1021px;top:675px;width:73px;height:21px;border:1px solid #003c74;border-radius:3px;background:linear-gradient(to bottom,#ffffff 0%,#f6f5ee 55%,#ecebe0 85%,#d6d0c5 100%);"></div><span class="t" style="left:1049px;top:680px;letter-spacing:0.094px;transform:scaleY(1.12);transform-origin:0 10.3px;">OK</span>
<div class="abs " style="left:1102px;top:675px;width:73px;height:21px;border:1px solid #003c74;border-radius:3px;background:linear-gradient(to bottom,#ffffff 0%,#f6f5ee 55%,#ecebe0 85%,#d6d0c5 100%);"></div><span class="t" style="left:1118px;top:680px;letter-spacing:0.006px;transform:scaleY(1.12);transform-origin:0 10.3px;">Отмена</span>
<div class="abs " style="left:24px;top:4px;width:582px;height:330px;background:#0848ea;border-radius:8px 8px 0 0;box-shadow:inset 1px 0 0 #0019cf,inset -1px 0 0 #0019cf,inset 0 -2px 0 #001a9a;"></div>
<div class="abs " style="left:24px;top:4px;width:582px;height:30px;border-radius:8px 8px 0 0;background:linear-gradient(to bottom,#2a7df5 0%,#3c90ff 5%,#3a8cff 9%,#1470f5 13%,#0a60ec 18%,#0052e2 30%,#0050e0 55%,#0458ea 68%,#0666fc 82%,#0664fa 90%,#0450e8 93%,#0134c8 97%,#0134c8 100%);"></div>
<svg class="abs" style="left:30px;top:11px;" width="17" height="17" viewBox="0 0 16 16"><circle cx="7" cy="7" r="6.3" fill="url(#globe)"/><path d="M3.5,2.5 C5,1.2 7.5,1.2 8.5,2.2 C9.5,3.4 8,4.8 6.5,5.2 C5.5,5.6 5.6,7.5 4.2,7.2 C2.8,6.8 1.8,5 3.5,2.5 Z" fill="#39b54a"/><path d="M8.2,8.5 C9.5,7.8 11,8.2 11.5,9.5 C10.8,11 9,12.2 8,11.5 C7.2,10.5 7.4,9.2 8.2,8.5 Z" fill="#2e9e40"/><path d="M7.2,5.8 L11.5,6.4 L13.2,10 L11,11.4 L7.8,8.6 Z" fill="#cfe3f7" stroke="#8fb3dd" stroke-width=".5"/><path d="M12,10.8 C14.5,11.6 14.8,13.4 12.5,14.2 C10.5,14.8 8.2,14.6 6.5,15.4" fill="none" stroke="#b9d3ee" stroke-width="1.5" stroke-linecap="round"/></svg>
<span class="t" style="left:50.3px;top:14px;font-size:13px;line-height:16px;font-weight:bold;color:#fff;letter-spacing:-0.105px;transform:scaleY(1.08);transform-origin:0 12.5px;text-shadow:1px 1px 0 #0a2a8a;">Сетевые подключения</span>
<div class="abs " style="left:533px;top:10px;width:21px;height:21px;border:1px solid #fff;border-radius:3px;background:radial-gradient(circle at 30% 25%,#5a8cf5 0%,#2e62e8 45%,#1c44c8 100%);"><div class="abs" style="left:4px;bottom:3px;width:8px;height:3px;background:#fff"></div></div>
<div class="abs " style="left:556px;top:10px;width:21px;height:21px;border:1px solid #fff;border-radius:3px;background:radial-gradient(circle at 30% 25%,#5a8cf5 0%,#2e62e8 45%,#1c44c8 100%);"><div class="abs" style="left:4px;top:4px;width:11px;height:11px;border:1px solid #fff;border-top-width:3px"></div></div>
<div class="abs " style="left:579px;top:10px;width:21px;height:21px;border:1px solid #fff;border-radius:3px;background:radial-gradient(circle at 30% 25%,#f08a6a 0%,#db4f2c 50%,#bc3414 100%);"><svg class="abs" style="left:0;top:0" width="19" height="19" viewBox="0 0 19 19"><path d="M5,5 L14,14 M14,5 L5,14" stroke="#fff" stroke-width="2.2" stroke-linecap="round"/></svg></div>
<div class="abs " style="left:28px;top:34px;width:574px;height:23px;background:linear-gradient(to right,#f5f5f4 0%,#f1f0ea 35%,#edeadb 75%,#ece9d8 100%);"></div>
<div class="abs " style="left:28px;top:56px;width:574px;height:1px;background:#d8d2bd"></div>
<div class="abs " style="left:563px;top:34px;width:39px;height:22px;background:#fff;border-left:1px solid #d8d2bd;"></div>
<svg class="abs" style="left:500px;top:0px;" width="132" height="73" viewBox="0 0 1318 729"><path d="M770,370 C795,355 820,360 838,378 L822,432 C805,418 780,415 755,428 Z" fill="#e8552a"/><path d="M850,382 C872,398 900,398 925,380 L908,440 C885,455 858,452 834,438 Z" fill="#5cb83a"/><path d="M752,440 C778,428 800,430 820,445 L805,500 C785,485 760,485 735,498 Z" fill="#3a8ae0"/><path d="M830,452 C855,468 880,468 905,452 L888,510 C865,528 838,525 815,508 Z" fill="#f2b81a"/></svg>
<span class="t" style="left:37.5px;top:39px;letter-spacing:-0.349px;">Файл</span>
<span class="t" style="left:79px;top:39px;letter-spacing:-0.034px;">Правка</span>
<span class="t" style="left:132.5px;top:39px;letter-spacing:-1.000px;">Вид</span>
<span class="t" style="left:167px;top:39px;letter-spacing:-0.281px;">Избранное</span>
<span class="t" style="left:237px;top:39px;letter-spacing:-0.334px;">Сервис</span>
<span class="t" style="left:289px;top:39px;letter-spacing:0.027px;">Дополнительно</span>
<span class="t" style="left:385px;top:39px;letter-spacing:-0.109px;">Справка</span>
<div class="abs " style="left:28px;top:57px;width:574px;height:40px;background:linear-gradient(to right,#f5f5f4 0%,#f1f0ea 35%,#edeadb 75%,#ece9d8 100%);"></div>
<div class="abs " style="left:28px;top:57px;width:574px;height:1px;background:#fbfaf6"></div>
<div class="abs " style="left:28px;top:96px;width:574px;height:1px;background:#d8d2bd"></div>
<svg class="abs" style="left:37.5px;top:65.8px;" width="22.6" height="22.6" viewBox="0 0 24 24"><circle cx="12" cy="12" r="11.3" fill="url(#navg)" stroke="#a2a29c" stroke-width="1"/><path d="M6,12 L12,6 L13.6,7.6 L10.6,10.8 L18.5,10.8 L18.5,13.2 L10.6,13.2 L13.6,16.4 L12,18 Z" fill="#fff"/></svg>
<span class="t" style="left:64.5px;top:71px;color:#aca899;letter-spacing:-0.258px;">Назад</span>
<svg class="abs" style="left:104px;top:75px" width="7" height="4"><path d="M0,0 L7,0 L3.5,4 Z" fill="#c3c0b0"/></svg>
<svg class="abs" style="left:124.5px;top:65.8px;" width="22.6" height="22.6" viewBox="0 0 24 24"><circle cx="12" cy="12" r="11.3" fill="url(#navg)" stroke="#a2a29c" stroke-width="1"/><g transform="translate(24 0) scale(-1 1)"><path d="M6,12 L12,6 L13.6,7.6 L10.6,10.8 L18.5,10.8 L18.5,13.2 L10.6,13.2 L13.6,16.4 L12,18 Z" fill="#fff"/></g></svg>
<svg class="abs" style="left:155px;top:75px" width="7" height="4"><path d="M0,0 L7,0 L3.5,4 Z" fill="#c3c0b0"/></svg>
<svg class="abs" style="left:168px;top:58px;" width="110" height="40" viewBox="0 0 1323 481"><path d="M85,185 L140,175 L165,200 L255,195 L255,330 L90,355 Z" fill="#e9b93a"/><path d="M135,250 L300,215 L255,330 L90,355 Z" fill="url(#fold)" stroke="#d9a520" stroke-width="5"/><path d="M205,95 L300,160 L260,168 C262,230 240,280 190,310 C205,270 212,220 205,178 L150,186 Z" fill="url(#grn)" stroke="#157a1c" stroke-width="4"/></svg>
<div class="abs " style="left:201px;top:60px;width:1px;height:35px;background:#cfc9b0"></div>
<div class="abs " style="left:202px;top:60px;width:1px;height:35px;background:#fbfaf6"></div>
<svg class="abs" style="left:168px;top:58px;" width="110" height="40" viewBox="0 0 1323 481"><path d="M572,255 L606,288 L518,370 Q492,376 482,348 Z" fill="#f09a3a" stroke="#a89ac8" stroke-width="6"/><circle cx="668" cy="185" r="86" fill="url(#lens)" stroke="#9c98d8" stroke-width="14"/></svg>
<span class="t" style="left:236px;top:71px;letter-spacing:-0.246px;">Поиск</span>
<svg class="abs" style="left:270px;top:58px;" width="110" height="40" viewBox="0 0 1323 481"><path d="M98,130 L165,122 L190,150 L275,150 L275,300 L105,322 Z" fill="#f1c84e" stroke="#d9a520" stroke-width="4"/><path d="M148,190 L210,180 L235,205 L310,200 L310,245 L148,260 Z" fill="#f3cf5c" stroke="#d9a520" stroke-width="4"/><path d="M190,262 L358,225 L320,325 L150,355 Z" fill="url(#fold)" stroke="#d9a520" stroke-width="5"/></svg>
<span class="t" style="left:305px;top:71px;letter-spacing:-0.109px;">Папки</span>
<div class="abs " style="left:347px;top:60px;width:1px;height:35px;background:#cfc9b0"></div>
<div class="abs " style="left:348px;top:60px;width:1px;height:35px;background:#fbfaf6"></div>
<svg class="abs" style="left:270px;top:58px;" width="110" height="40" viewBox="0 0 1323 481"><path d="M1030,125 L1100,100 L1160,112 L1200,150 L1205,320 L1040,345 Z" fill="#e9e9e6" stroke="#bdbdb8" stroke-width="5"/><path d="M1100,245 L1180,245 L1180,205 L1272,265 L1180,335 L1180,300 L1100,300 Z" fill="#b5b5b0" stroke="#9a9a95" stroke-width="4"/></svg>
<svg class="abs" style="left:378px;top:58px;" width="150" height="40" viewBox="0 0 1323 353"><path d="M75,120 L140,85 L215,100 L270,135 L240,235 L95,250 Z" fill="#e9e9e6" stroke="#bdbdb8" stroke-width="4"/><path d="M120,210 C170,215 195,190 195,165 L175,168 L200,130 L232,160 L215,162 C215,205 175,235 120,225 Z" fill="#c9c9c4" stroke="#a2a29c" stroke-width="3"/></svg>
<svg class="abs" style="left:378px;top:58px;" width="150" height="40" viewBox="0 0 1323 353"><path d="M375,82 L545,248 M528,98 L378,232" stroke="#e62a08" stroke-width="27" stroke-linecap="round" fill="none"/></svg>
<svg class="abs" style="left:378px;top:58px;" width="150" height="40" viewBox="0 0 1323 353"><path d="M648,95 L690,100 L690,150 C740,100 810,110 818,165 C822,205 790,235 760,250 L745,228 C775,210 792,190 786,165 C780,135 735,135 712,170 L750,175 L750,190 L648,188 Z" fill="#1f6fe0" stroke="#0d49b0" stroke-width="5"/></svg>
<div class="abs " style="left:480px;top:60px;width:1px;height:35px;background:#cfc9b0"></div>
<div class="abs " style="left:481px;top:60px;width:1px;height:35px;background:#fbfaf6"></div>
<svg class="abs" style="left:378px;top:58px;" width="150" height="40" viewBox="0 0 1323 353"><rect x="972" y="90" width="198" height="162" rx="8" fill="#f4f8ff" stroke="#1c63d8" stroke-width="8"/><rect x="972" y="90" width="198" height="26" fill="#2a6fe0"/><rect x="1005" y="133" width="26" height="24" fill="#9a8fd0"/><rect x="1005" y="168" width="26" height="5" fill="#8a8a8a"/><rect x="1058" y="133" width="26" height="24" fill="#1f78e0"/><rect x="1058" y="168" width="26" height="5" fill="#8a8a8a"/><rect x="1111" y="133" width="26" height="24" fill="#149a2c"/><rect x="1111" y="168" width="26" height="5" fill="#8a8a8a"/><rect x="1005" y="185" width="26" height="24" fill="#f07040"/><rect x="1005" y="220" width="26" height="5" fill="#8a8a8a"/><rect x="1058" y="185" width="26" height="24" fill="#0a2aa0"/><rect x="1058" y="220" width="26" height="5" fill="#8a8a8a"/><rect x="1111" y="185" width="26" height="24" fill="#d8a010"/><rect x="1111" y="220" width="26" height="5" fill="#8a8a8a"/><path d="M1200,160 L1246,160 L1223,186 Z" fill="#000"/></svg>
<div class="abs " style="left:28px;top:97px;width:574px;height:24px;background:linear-gradient(to right,#f5f5f4 0%,#f1f0ea 35%,#edeadb 75%,#ece9d8 100%);"></div>
<div class="abs " style="left:28px;top:97px;width:574px;height:1px;background:#fbfaf6"></div>
<span class="t" style="left:34px;top:103px;color:#8c8a7c;letter-spacing:-0.209px;">Адрес:</span>
<div class="abs " style="left:73px;top:98px;width:448px;height:22px;background:#fff;border:1px solid #7f9db9;"></div>
<svg class="abs" style="left:76px;top:100px;" width="17" height="17" viewBox="0 0 16 16"><circle cx="7" cy="7" r="6.3" fill="url(#globe)"/><path d="M3.5,2.5 C5,1.2 7.5,1.2 8.5,2.2 C9.5,3.4 8,4.8 6.5,5.2 C5.5,5.6 5.6,7.5 4.2,7.2 C2.8,6.8 1.8,5 3.5,2.5 Z" fill="#39b54a"/><path d="M8.2,8.5 C9.5,7.8 11,8.2 11.5,9.5 C10.8,11 9,12.2 8,11.5 C7.2,10.5 7.4,9.2 8.2,8.5 Z" fill="#2e9e40"/><path d="M7.2,5.8 L11.5,6.4 L13.2,10 L11,11.4 L7.8,8.6 Z" fill="#cfe3f7" stroke="#8fb3dd" stroke-width=".5"/><path d="M12,10.8 C14.5,11.6 14.8,13.4 12.5,14.2 C10.5,14.8 8.2,14.6 6.5,15.4" fill="none" stroke="#b9d3ee" stroke-width="1.5" stroke-linecap="round"/></svg>
<span class="t" style="left:95.5px;top:104px;letter-spacing:0.150px;">Сетевые подключения</span>
<div class="abs " style="left:504px;top:100px;width:16px;height:18px;border-radius:2px;background:linear-gradient(to bottom,#d6e0fb,#b9cbf6);border:1px solid #b3c6f0;"><svg class="abs" style="left:3px;top:5px" width="9" height="6" viewBox="0 0 9 6"><path d="M1,1 L4.5,4.5 L8,1" stroke="#4d6185" stroke-width="1.8" fill="none"/></svg></div>
<div class="abs " style="left:527px;top:99px;width:19px;height:19px;border-radius:3px;background:linear-gradient(to bottom,#5cc35a,#2da336 55%,#1f8a2c);border:1px solid #1d7a26;"><svg class="abs" style="left:2px;top:3px" width="13" height="11" viewBox="0 0 13 11"><path d="M1,5.5 L11,5.5 M7,1 L11.5,5.5 L7,10" stroke="#fff" stroke-width="2" fill="none"/></svg></div>
<span class="t" style="left:549.5px;top:103px;letter-spacing:-0.201px;">Переход</span>
<div class="abs " style="left:28px;top:120px;width:574px;height:210px;background:#fff;border:1px solid #8aa2bf;"></div>
<span class="t" style="left:44px;top:126px;font-weight:bold;letter-spacing:0.291px;">ЛВС или высокоскоростной Интернет</span>
<div class="abs " style="left:30px;top:140px;width:300px;height:1px;background:linear-gradient(to right,#1a2a9a 0%,#5a6ac0 45%,#fff 100%);"></div>
<svg class="abs" style="left:40px;top:150px;" width="66" height="60" viewBox="0 0 802 729"><path d="M400,186 L505,186 Q518,186 518,200 L518,470" fill="none" stroke="#16248c" stroke-width="13"/><path d="M152,510 L152,590 Q152,602 166,602 L365,602" fill="none" stroke="#16248c" stroke-width="13"/><ellipse cx="330" cy="372" rx="72" ry="42" fill="url(#baseSel)"/><path d="M290,290 L350,280 L345,370 L300,372 Z" fill="#4d6fd0"/><path d="M178,122 L380,88 L400,262 L205,300 Z" fill="#3766c8"/><path d="M196,136 L368,106 L384,250 L218,282 Z" fill="url(#scrSel)"/><ellipse cx="192" cy="442" rx="108" ry="52" fill="url(#baseSel)"/><path d="M170,370 L250,350 L250,450 L185,455 Z" fill="#4d6fd0"/><path d="M78,196 L282,158 L300,340 L112,392 Z" fill="#3766c8"/><path d="M98,210 L268,178 L284,326 L126,370 Z" fill="url(#scrSel)"/><rect x="476" y="488" width="70" height="78" fill="url(#pipeSel)"/><rect x="378" y="568" width="262" height="72" rx="6" fill="url(#pipeSel)"/><rect x="462" y="560" width="94" height="92" rx="8" fill="#8d8f78" stroke="#6f7160" stroke-width="6"/></svg>
<div class="abs " style="left:99px;top:160px;width:158px;height:40px;background:#316ac5"></div>
<span class="t" style="left:99px;top:161px;color:#fff;letter-spacing:-1.000px;">LAN</span>
<span class="t" style="left:99px;top:174px;color:#fff;letter-spacing:0.099px;">Подключено</span>
<span class="t" style="left:99px;top:187px;color:#fff;letter-spacing:-0.366px;">AMD PCNET Family Ethernet A...</span>
<svg class="abs" style="left:258px;top:150px;" width="66" height="60" viewBox="0 0 802 729"><path d="M400,186 L505,186 Q518,186 518,200 L518,470" fill="none" stroke="#1a1060" stroke-width="13"/><path d="M152,510 L152,590 Q152,602 166,602 L365,602" fill="none" stroke="#1a1060" stroke-width="13"/><ellipse cx="330" cy="372" rx="72" ry="42" fill="url(#base)"/><path d="M290,290 L350,280 L345,370 L300,372 Z" fill="#6a6fd8"/><path d="M178,122 L380,88 L400,262 L205,300 Z" fill="#8d8fd0"/><path d="M196,136 L368,106 L384,250 L218,282 Z" fill="url(#scr)"/><ellipse cx="192" cy="442" rx="108" ry="52" fill="url(#base)"/><path d="M170,370 L250,350 L250,450 L185,455 Z" fill="#6a6fd8"/><path d="M78,196 L282,158 L300,340 L112,392 Z" fill="#8d8fd0"/><path d="M98,210 L268,178 L284,326 L126,370 Z" fill="url(#scr)"/><rect x="476" y="488" width="70" height="78" fill="url(#pipeV)"/><rect x="378" y="568" width="262" height="72" rx="6" fill="url(#pipe)"/><rect x="462" y="560" width="94" height="92" rx="8" fill="#f2c12e" stroke="#c8930f" stroke-width="6"/></svg>
<span class="t" style="left:316.5px;top:161px;letter-spacing:-0.340px;">Kongsberg</span>
<span class="t" style="left:316.5px;top:174px;color:#808080;letter-spacing:0.099px;">Подключено</span>
<span class="t" style="left:316.5px;top:187px;color:#808080;letter-spacing:-0.117px;">Kongsberg Maritime virtual Ne...</span>
<span class="t" style="left:44px;top:225px;font-weight:bold;letter-spacing:0.647px;">Мастер</span>
<div class="abs " style="left:30px;top:239px;width:300px;height:1px;background:linear-gradient(to right,#1a2a9a 0%,#5a6ac0 45%,#fff 100%);"></div>
<svg class="abs" style="left:40px;top:248px;" width="66" height="60" viewBox="0 0 802 729"><path d="M85,120 Q85,95 120,95 L640,95 L640,660 L150,660 L85,615 Z" fill="#c98a0a"/><path d="M118,100 L640,100 L640,150 L150,150 L150,640 L118,615 Z" fill="url(#gold)"/><rect x="150" y="145" width="490" height="430" fill="#fffbd0"/><path d="M150,575 L640,575 L640,655 L165,655 L150,640 Z" fill="url(#gold)"/><path d="M150,600 L640,600" stroke="#fff6b0" stroke-width="10"/><g transform="translate(0 0)"><path d="M325,205 L400,200 L415,300 L340,320 Z" fill="#c5c8ea"/><path d="M345,225 L395,222 M347,245 L398,240 M350,265 L400,258" stroke="#8d90c8" stroke-width="8"/><ellipse cx="245" cy="355" rx="65" ry="32" fill="url(#base)" stroke="#9a9cc8" stroke-width="4"/><path d="M230,300 L285,290 L280,350 L240,352 Z" fill="#6a6fd8"/><path d="M185,200 L320,180 L335,300 L215,335 Z" fill="#8d8fd0"/><path d="M200,212 L308,196 L320,290 L226,318 Z" fill="url(#scr)"/></g><g transform="translate(118 140)"><path d="M325,205 L400,200 L415,300 L340,320 Z" fill="#c5c8ea"/><path d="M345,225 L395,222 M347,245 L398,240 M350,265 L400,258" stroke="#8d90c8" stroke-width="8"/><ellipse cx="245" cy="355" rx="65" ry="32" fill="url(#base)" stroke="#9a9cc8" stroke-width="4"/><path d="M230,300 L285,290 L280,350 L240,352 Z" fill="#6a6fd8"/><path d="M185,200 L320,180 L335,300 L215,335 Z" fill="#8d8fd0"/><path d="M200,212 L308,196 L320,290 L226,318 Z" fill="url(#scr)"/></g></svg>
<svg class="abs" style="left:258px;top:248px;" width="66" height="60" viewBox="0 0 802 729"><rect x="400" y="100" width="66" height="110" fill="#c23a14"/><rect x="400" y="100" width="22" height="110" fill="#a02808"/><path d="M140,320 L270,385 L270,575 L140,450 Z" fill="url(#hside)"/><path d="M270,385 L430,200 L565,330 L565,492 L270,575 Z" fill="url(#hwall)"/><path d="M105,290 L270,122 L432,192 L590,335 L565,350 L430,215 L270,392 L232,388 Z" fill="url(#roof)"/><path d="M316,405 L385,392 L385,458 L316,470 Z" fill="#1464d2"/><path d="M435,385 L496,372 L496,505 L435,522 Z" fill="#1464d2"/><rect x="352" y="555" width="26" height="50" fill="url(#pipeV)"/><rect x="183" y="615" width="364" height="42" rx="6" fill="url(#pipe)"/><rect x="330" y="600" width="72" height="66" rx="6" fill="#f4c63a" stroke="#c8930f" stroke-width="6"/></svg>
<span class="t" style="left:316.5px;top:260px;letter-spacing:0.049px;">Мастер установки сети</span>
<div class="abs " style="left:87px;top:192px;width:168px;height:169px;background:#ece9d8;border:1px solid #aca899;box-shadow:2px 2px 2px rgba(0,0,0,.55);"></div>
<div class="abs " style="left:88px;top:193px;width:166px;height:167px;border:1px solid #fff;border-right-color:#ece9d8;border-bottom-color:#ece9d8;"></div>
<span class="t" style="left:106.5px;top:197px;color:#000;letter-spacing:-0.326px;">Отключить</span>
<span class="t" style="left:106.5px;top:214px;font-weight:bold;color:#000;letter-spacing:0.574px;">Состояние</span>
<span class="t" style="left:106.5px;top:231px;color:#000;letter-spacing:-0.170px;">Исправить</span>
<span class="t" style="left:106.5px;top:257px;color:#000;letter-spacing:-0.009px;">Подключения типа мост</span>
<span class="t" style="left:106.5px;top:283px;color:#000;letter-spacing:0.150px;">Создать ярлык</span>
<span class="t" style="left:106.5px;top:300px;color:#aca899;letter-spacing:0.167px;text-shadow:1px 1px 0 #fff;">Удалить</span>
<span class="t" style="left:106.5px;top:317px;color:#000;letter-spacing:-0.180px;">Переименовать</span>
<span class="t" style="left:106.5px;top:343px;color:#000;letter-spacing:-0.116px;">Свойства</span>
<div class="abs " style="left:91px;top:249px;width:160px;height:1px;background:#aca899"></div>
<div class="abs " style="left:91px;top:250px;width:160px;height:1px;background:#fff"></div>
<div class="abs " style="left:91px;top:275px;width:160px;height:1px;background:#aca899"></div>
<div class="abs " style="left:91px;top:276px;width:160px;height:1px;background:#fff"></div>
<div class="abs " style="left:91px;top:335px;width:160px;height:1px;background:#aca899"></div>
<div class="abs " style="left:91px;top:336px;width:160px;height:1px;background:#fff"></div>
</body>
</html>
